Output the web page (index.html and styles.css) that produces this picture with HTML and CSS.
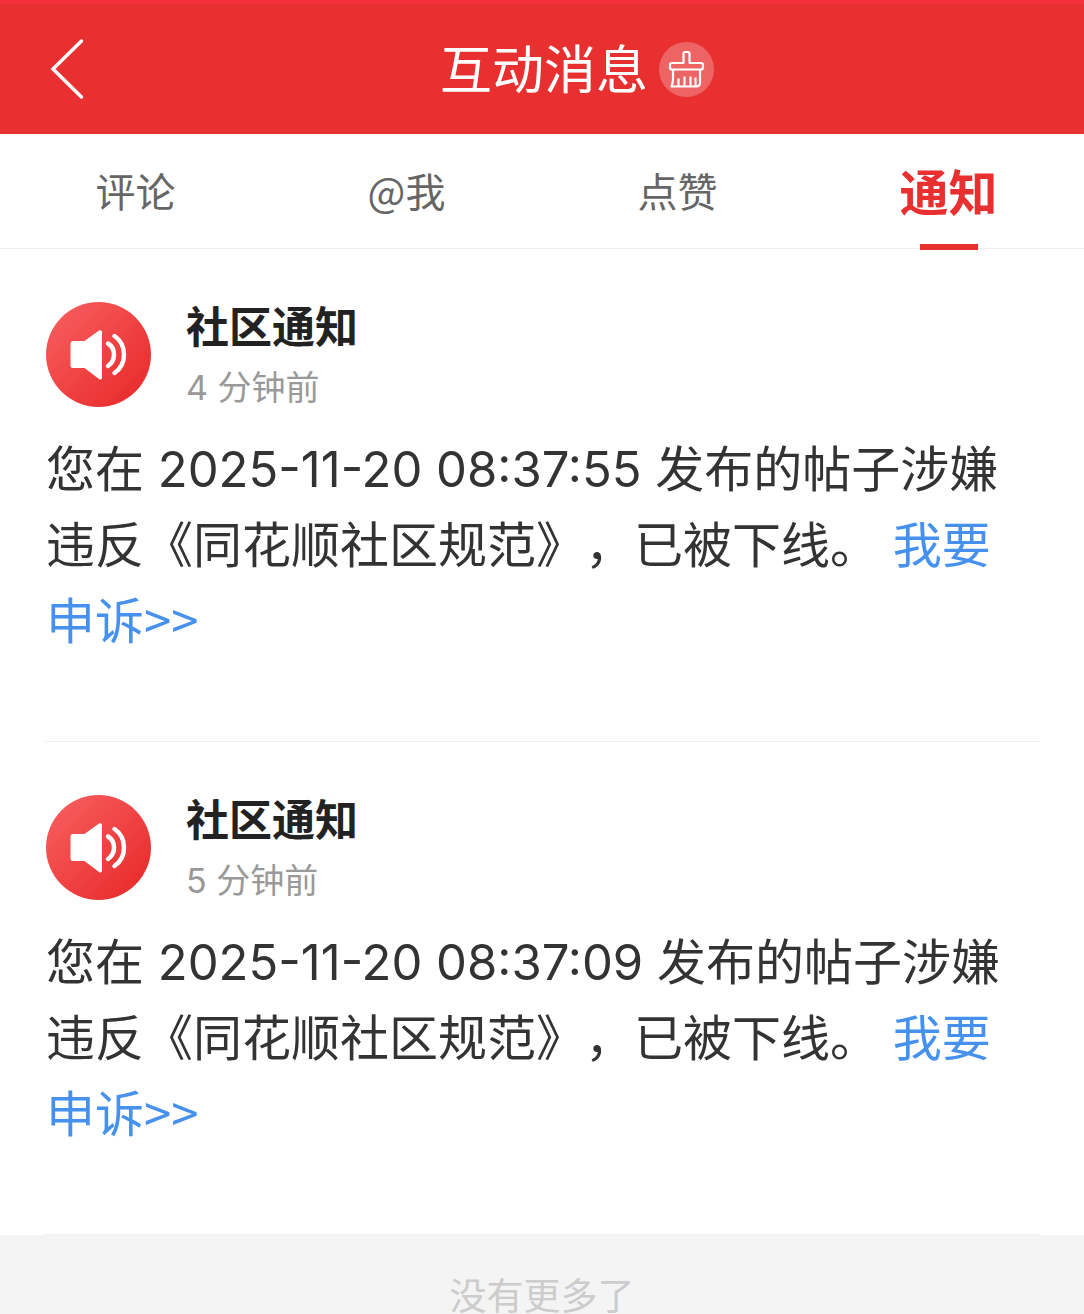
FILE: index.html
```
<!DOCTYPE html>
<html lang="zh-CN">
  <head>
    <meta charset="UTF-8" />
    <meta name="viewport" content="width=device-width, initial-scale=1.0" />
    <title>互动消息</title>
    <link rel="stylesheet" href="styles.css">
  </head>
  <body>
    <header class="navbar">
      <button class="back" aria-label="返回">
        <svg width="36" height="62" viewBox="0 0 36 62" fill="none" stroke="#fff" stroke-width="3.500">
          <path d="M31.500 3 3 31 31.500 59" stroke-linecap="round" />
        </svg>
      </button>
      <h1>互动消息</h1>
      <button class="clear" aria-label="清除未读">
        <svg width="55" height="55" viewBox="0 0 55 55" fill="none" stroke="#fff" stroke-width="2.200" stroke-linejoin="round">
          <path d="M24.500 21v-9.500q0-1.500 1.500-1.500h3q1.500 0 1.500 1.500v9.500h11.500q2 0 2 2v2.500q0 2-2 2h-29q-2 0-2-2v-2.500q0-2 2-2z" />
          <path d="M14 28v9q0 4-1.500 7.500h24.500q4 0 4-4v-12.500" />
          <path d="M19.500 44v-7.500M25.500 44v-9.500M31.500 44v-9.500M36.500 44v-8.500" />
        </svg>
      </button>
    </header>

    <nav class="tabs">
      <a href="#comment">评论</a>
      <a href="#at">@我</a>
      <a href="#like">点赞</a>
      <a href="#notice" class="active" aria-current="page">通知</a>
    </nav>

    <main class="list">
      <article class="item">
        <div class="head">
          <div class="avatar">
            <svg width="105" height="105" viewBox="0 0 105 105">
              <path fill="#fff" d="M27 39h11.500L53 28.600q3-1.500 3 1.800v45q0 3-3 1.500L38.500 66H27q-2.500 0-2.500-2.500v-22Q24.500 39 27 39z" />
              <path fill="none" stroke="#fff" stroke-width="4.500" stroke-linecap="round" d="M62 41.500q6 3.500 6 11t-6 11.500M68.500 34q9.500 6.500 9.500 18.500t-9.500 18.500" />
            </svg>
          </div>
          <div class="info">
            <h2>社区通知</h2>
            <time>4 分钟前</time>
          </div>
        </div>
        <p class="text">您在 2025-11-20 08:37:55 发布的帖子涉嫌违反《同花顺社区规范》，已被下线。 <a href="#appeal">我要申诉&gt;&gt;</a></p>
      </article>

      <article class="item">
        <div class="head">
          <div class="avatar">
            <svg width="105" height="105" viewBox="0 0 105 105">
              <path fill="#fff" d="M27 39h11.500L53 28.600q3-1.500 3 1.800v45q0 3-3 1.500L38.500 66H27q-2.500 0-2.500-2.500v-22Q24.500 39 27 39z" />
              <path fill="none" stroke="#fff" stroke-width="4.500" stroke-linecap="round" d="M62 41.500q6 3.500 6 11t-6 11.500M68.500 34q9.500 6.500 9.500 18.500t-9.500 18.500" />
            </svg>
          </div>
          <div class="info">
            <h2>社区通知</h2>
            <time>5 分钟前</time>
          </div>
        </div>
        <p class="text">您在 2025-11-20 08:37:09 发布的帖子涉嫌违反《同花顺社区规范》，已被下线。 <a href="#appeal">我要申诉&gt;&gt;</a></p>
      </article>
    </main>

    <footer class="no-more">没有更多了</footer>
  </body>
</html>
```

FILE: styles.css
```
:root {
  --red: #e93030;
  --link: #4691ee;
  --line: #eee;
  --cjk: "Noto Sans CJK SC", sans-serif;
}

* {
  box-sizing: border-box;
}

body {
  margin: 0;
  min-height: 100vh;
  display: flex;
  flex-direction: column;
  background: #f4f4f4;
  color: #333;
  font-family: var(--cjk);
}

h1,
h2,
p {
  margin: 0;
}

button {
  padding: 0;
  border: none;
  background: none;
  cursor: pointer;
}

a {
  color: var(--link);
  text-decoration: none;
}

svg {
  display: block;
}

/* top bar */
.navbar {
  display: grid;
  grid-template-columns: 1fr auto 1fr;
  align-items: center;
  gap: 11px;
  height: 134px;
  padding: 0 46px 0 50px;
  background: var(--red);
  border-top: 4px solid #f52f39;
}

.back,
.clear {
  justify-self: start;
}

.navbar h1 {
  padding-bottom: 4px;
  color: #fff;
  font-size: 52px;
  font-weight: 400;
  line-height: 76px;
}

.clear {
  border-radius: 50%;
  background: rgba(255, 255, 255, 0.25);
}

/* tabs */
.tabs {
  display: flex;
  height: 115px;
  background: #fff;
  border-bottom: 1px solid var(--line);
}

.tabs a {
  position: relative;
  flex: 1;
  color: #666;
  font-size: 40px;
  line-height: 112px;
  text-align: center;
}

.tabs .active {
  color: var(--red);
  font-size: 49px;
  font-weight: 700;
}

.tabs .active::after {
  content: "";
  position: absolute;
  left: 50%;
  bottom: -2px;
  width: 58px;
  height: 6px;
  margin-left: -29px;
  background: var(--red);
}

/* notices */
.list {
  padding: 0 45px;
  background: #fff;
}

.item {
  padding: 53px 1px 81px;
  border-bottom: 1px solid var(--line);
}

.head {
  display: flex;
  gap: 35px;
  margin-bottom: 20px;
}

.avatar {
  width: 105px;
  height: 105px;
  border-radius: 50%;
  background: linear-gradient(135deg, #f96163, #e72626);
}

.info {
  display: flex;
  flex-direction: column;
  gap: 18px;
}

.info h2 {
  color: #222;
  font-size: 43px;
  font-weight: 700;
  line-height: 44px;
}

.info time {
  color: #999;
  font-family: "Inter", var(--cjk);
  font-size: 34px;
  line-height: 48px;
}

.text {
  padding-right: 8px;
  font-family: "Inter", var(--cjk);
  font-size: 49px;
  line-height: 76px;
  /* full-width punctuation keeps its full cell */
  text-spacing-trim: space-all;
}

/* short line box, so the second font does not push the rows apart */
.text a {
  font-family: var(--cjk);
  line-height: 1;
}

.no-more {
  padding: 32px 0;
  color: #ccc;
  font-size: 37px;
  line-height: 54px;
  text-align: center;
}
```
